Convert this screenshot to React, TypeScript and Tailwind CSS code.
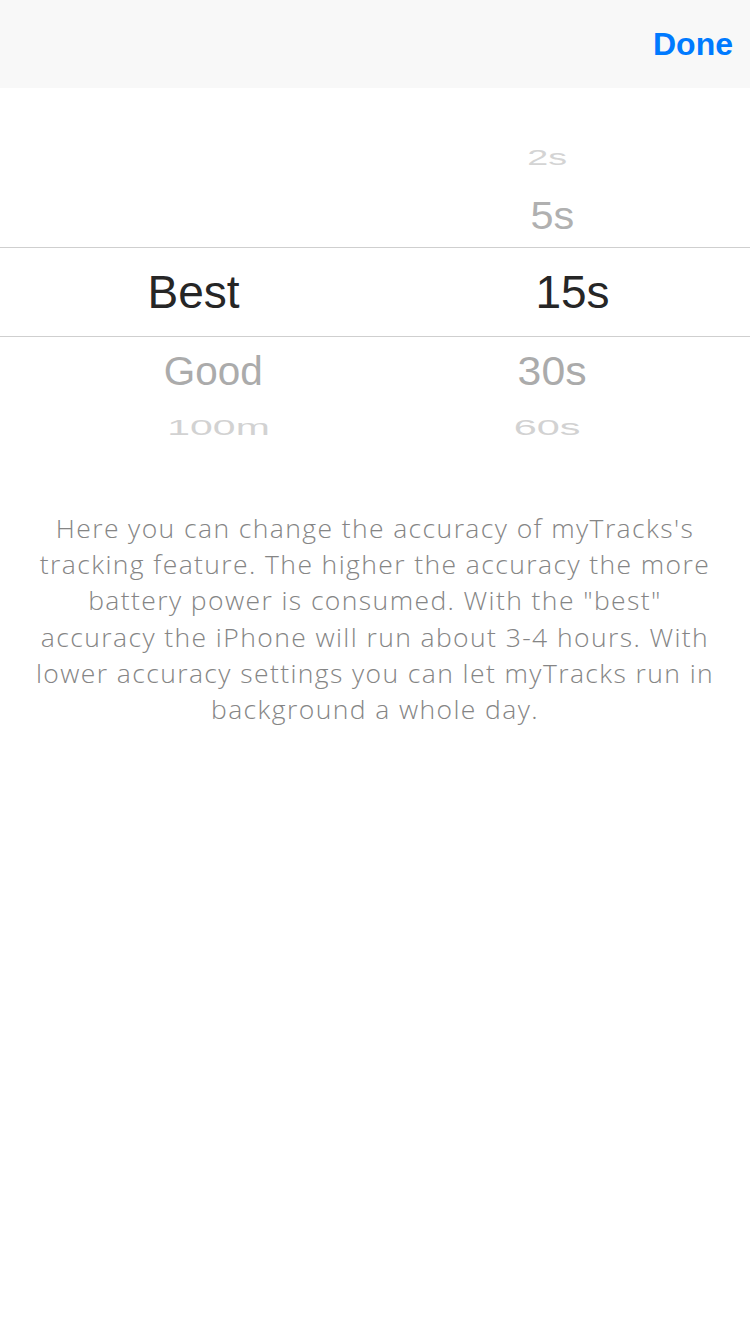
import React from "react";

const font = { fontFamily: '"Liberation Sans", Arial, sans-serif' };
const light = { fontFamily: '"Open Sans", "Liberation Sans", sans-serif' };

export default function App() {
  return (
    <div className="min-h-screen w-[750px] bg-white" style={font}>
      <div className="flex h-[88px] items-center justify-end bg-[#f8f8f8] pr-[17px]">
        <span className="text-[32px] font-bold text-[#007aff]">Done</span>
      </div>

      {/* picker */}
      <div className="text-[46px] leading-none">
        <div className="flex h-[159px] flex-col pt-[44px]">
          <div className="grid h-[50px] grid-cols-2">
            <div />
            <div className="flex items-center justify-center">
              <span className="translate-x-[-15px] scale-x-[0.82] scale-y-[0.48] text-[#d4d4d4]">2s</span>
            </div>
          </div>
          <div className="grid h-[65px] grid-cols-2">
            <div />
            <div className="flex items-center justify-center">
              <span className="translate-x-[-10px] scale-x-[0.9] scale-y-[0.85] text-[#b0b0b0]">5s</span>
            </div>
          </div>
        </div>
        <div className="grid h-[90px] grid-cols-2 border-y border-[#cfcfcf]">
          <div className="flex items-center justify-center">
            <span className="translate-x-[6px] text-[#262626]">Best</span>
          </div>
          <div className="flex items-center justify-center">
            <span className="translate-x-[10px] text-[#262626]">15s</span>
          </div>
        </div>
        <div className="grid h-[68px] grid-cols-2">
          <div className="flex items-center justify-center">
            <span className="translate-x-[26px] scale-x-[0.88] scale-y-[0.9] text-[#ababab]">Good</span>
          </div>
          <div className="flex items-center justify-center">
            <span className="translate-x-[-10px] scale-x-[0.93] scale-y-[0.9] text-[#ababab]">30s</span>
          </div>
        </div>
        <div className="grid h-[44px] grid-cols-2">
          <div className="flex items-center justify-center">
            <span className="translate-x-[31px] scale-x-[0.89] scale-y-[0.46] text-[#d2d2d2]">100m</span>
          </div>
          <div className="flex items-center justify-center">
            <span className="translate-x-[-15px] scale-x-[0.9] scale-y-[0.46] text-[#d2d2d2]">60s</span>
          </div>
        </div>
      </div>

      <div
        className="mt-[61px] flex flex-col items-center text-center text-[26.5px] font-light leading-[36.2px] tracking-[1.4px] text-[#858585]"
        style={light}
      >
        <span className="whitespace-nowrap">Here you can change the accuracy of myTracks's</span>
        <span className="whitespace-nowrap">tracking feature. The higher the accuracy the more</span>
        <span className="whitespace-nowrap">battery power is consumed. With the "best"</span>
        <span className="whitespace-nowrap">accuracy the iPhone will run about 3-4 hours. With</span>
        <span className="whitespace-nowrap">lower accuracy settings you can let myTracks run in</span>
        <span className="whitespace-nowrap">background a whole day.</span>
      </div>
    </div>
  );
}
